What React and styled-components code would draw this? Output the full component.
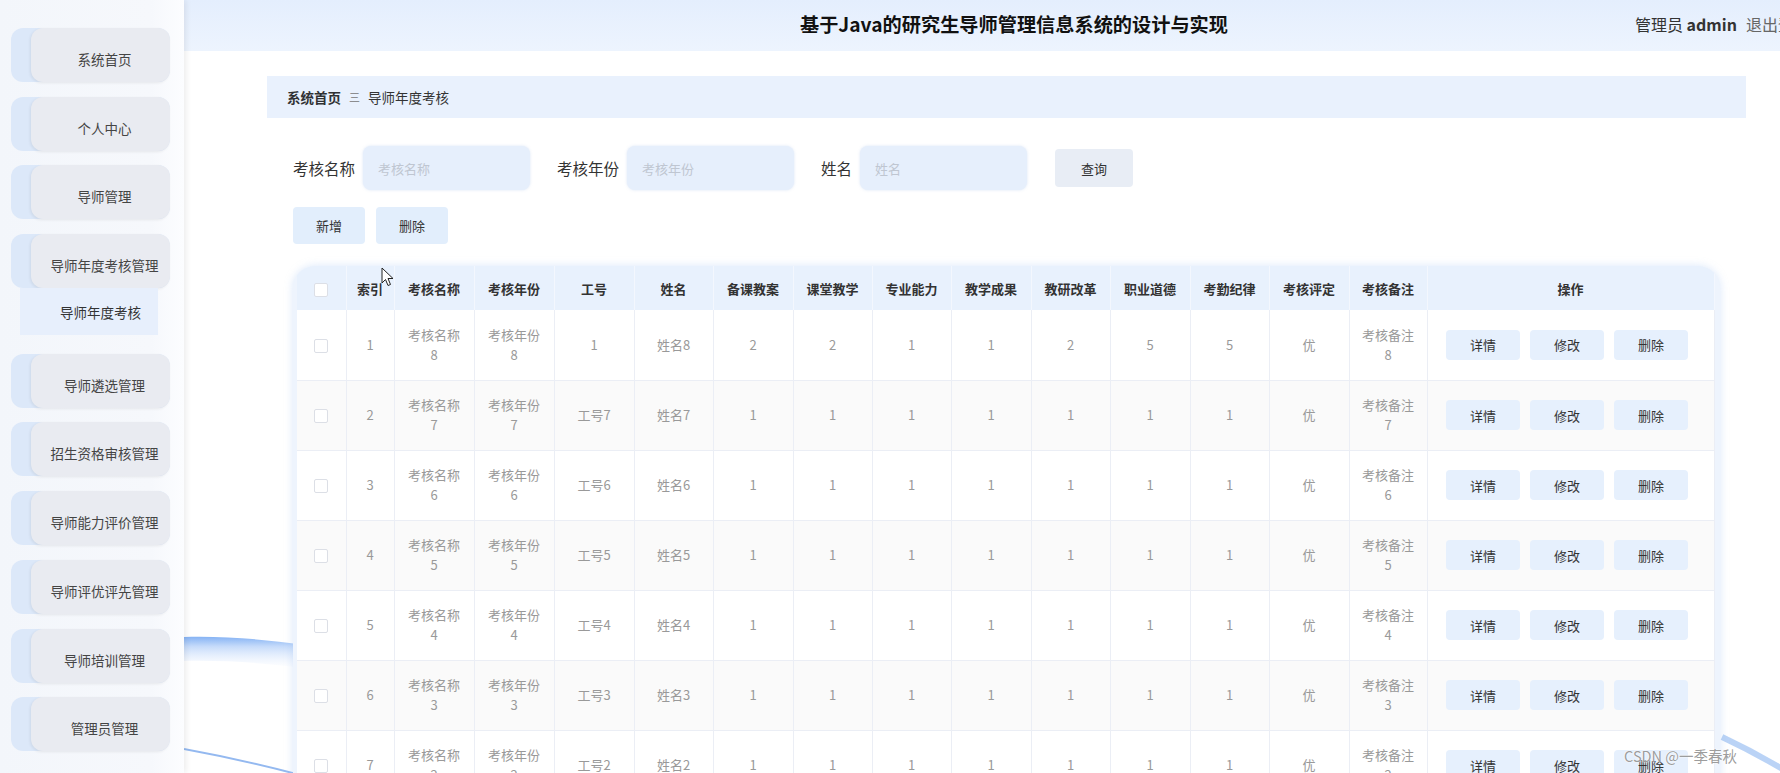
import React from "react";
import styled, { createGlobalStyle } from "styled-components";

const GlobalStyle = createGlobalStyle`
  html, body { margin: 0; padding: 0; width: 1780px; height: 773px; overflow: hidden; background: #fff; }
  body { font-family: "Noto Sans CJK SC", "Noto Sans", "Liberation Sans", sans-serif; color: #333; }
  * { box-sizing: border-box; }
`;

const Page = styled.div`
  display: flex;
  width: 1780px;
  height: 773px;
  overflow: hidden;
  position: relative;
`;

const Sidebar = styled.aside`
  width: 184px;
  flex: none;
  height: 100%;
  background: linear-gradient(90deg, #f3f6fb 0%, #f6f8fc 82%, #fcfdff 100%);
  box-shadow: 2px 0 6px rgba(0, 0, 0, 0.08);
  padding: 28px 0 0 11px;
  display: flex;
  flex-direction: column;
  gap: 14.7px;
  position: relative;
  z-index: 3;
`;

const NavGroup = styled.div`
  display: flex;
  flex-direction: column;
  padding-bottom: 4px;
`;

const NavItem = styled.div`
  width: 159px;
  height: 54px;
  flex: none;
  border-radius: 12px;
  background: #dce8f9;
  display: flex;
  padding-left: 20px;
`;

const NavInner = styled.div`
  flex: 1;
  border-radius: 12px;
  background: #e9ebf1;
  box-shadow: -1px 1px 3px rgba(0, 0, 0, 0.07);
  display: flex;
  align-items: center;
  justify-content: center;
  padding: 8px 0 0 8px;
  font-size: 13.5px;
  color: #444;
  white-space: nowrap;
`;

const SubItem = styled.div`
  margin-left: 9px;
  width: 138px;
  height: 47px;
  background: #e7effc;
  display: flex;
  align-items: center;
  padding-left: 40px;
  font-size: 13.5px;
  color: #333;
  white-space: nowrap;
`;

const Main = styled.main`
  flex: 1;
  min-width: 0;
  position: relative;
  display: flex;
  flex-direction: column;
`;

const BgArt = styled.svg`
  position: absolute;
  left: 0;
  top: 0;
  width: 1596px;
  height: 773px;
  z-index: 0;
  pointer-events: none;
`;

const Header = styled.header`
  height: 51px;
  flex: none;
  display: grid;
  grid-template-columns: 616px 835px 1fr;
  align-items: center;
  padding-bottom: 3px;
  background: linear-gradient(180deg, #e4eefd 0%, #edf4fe 100%);
  white-space: nowrap;
  overflow: hidden;
  position: relative;
  z-index: 1;
`;

const Title = styled.h1`
  grid-column: 2;
  margin: 0;
  font-size: 19.2px;
  font-weight: bold;
  color: #111;
`;

const UserInfo = styled.div`
  grid-column: 3;
  display: flex;
  gap: 9px;
  font-size: 16px;
  color: #333;
`;

const Strong = styled.b`
  font-weight: bold;
`;

const Logout = styled.span`
  color: #666;
`;

const Content = styled.div`
  position: relative;
  z-index: 1;
  padding: 25px 34px 0 83px;
  display: flex;
  flex-direction: column;
`;

const Breadcrumb = styled.div`
  height: 42px;
  background: #e9f1fd;
  display: flex;
  align-items: center;
  padding-left: 20px;
  font-size: 13.5px;
  color: #333;
`;

const CrumbHome = styled.span`
  font-weight: bold;
  color: #303133;
`;

const CrumbSep = styled.span`
  margin: 0 8px 0 8px;
  font-size: 11px;
  color: #777;
`;

const SearchRow = styled.div`
  margin-top: 28px;
  padding-left: 26px;
  height: 44px;
  display: flex;
  align-items: center;
`;

const Label = styled.span`
  font-size: 15.5px;
  color: #333;
  margin-right: 8px;
  white-space: nowrap;
`;

const Input = styled.input`
  width: 167px;
  height: 44px;
  border: none;
  border-radius: 8px;
  background: #e6effc;
  box-shadow: 0 0 3px rgba(150, 180, 230, 0.35);
  padding-left: 15px;
  margin-right: 27px;
  font-size: 13px;
  font-family: inherit;
  outline: none;
  &::placeholder { color: #bfc6d1; }
`;

const QueryButton = styled.button`
  width: 78px;
  height: 38px;
  border: none;
  border-radius: 4px;
  background: #e8edf5;
  color: #333;
  font-size: 13px;
  font-family: inherit;
  margin-left: 1px;
`;

const ActionRow = styled.div`
  margin-top: 17px;
  padding-left: 26px;
  display: flex;
  gap: 11px;
`;

const ActionButton = styled.button`
  width: 72px;
  height: 37px;
  border: none;
  border-radius: 4px;
  background: #e2eefc;
  color: #333;
  font-size: 13px;
  font-family: inherit;
`;

const TableCard = styled.div`
  margin: 22px 26px 0 26px;
  width: 1427px;
  border-radius: 22px 22px 0 0;
  background: #eef4fd;
  padding: 0 6px 0 4px;
  box-shadow: 0 0 8px rgba(150, 185, 240, 0.35);
  overflow: hidden;
`;

const Table = styled.table`
  width: 1417px;
  table-layout: fixed;
  border-collapse: collapse;
`;

const Th = styled.th`
  height: 44px;
  background: #e8f1fd;
  font-size: 13px;
  font-weight: bold;
  color: #333;
  text-align: center;
  border-right: 1px solid #f3f7fe;
  padding: 0 2px;
  white-space: nowrap;
`;

const Tr = styled.tr`
  background: ${(p) => (p.$striped ? "#fafafa" : "#ffffff")};
`;

const Td = styled.td`
  height: 70px;
  font-size: 13px;
  line-height: 20px;
  color: #999;
  text-align: center;
  border-right: 1px solid #ebeef5;
  border-bottom: 1px solid #ebeef5;
  padding: ${(p) => (p.$tight ? "0" : "0 12px")};
`;

const Check = styled.span`
  display: inline-block;
  width: 14px;
  height: 14px;
  border: 1px solid #dcdfe6;
  border-radius: 2px;
  background: #fff;
  vertical-align: middle;
`;

const OpGroup = styled.div`
  display: flex;
  justify-content: center;
  gap: 10px;
  padding-right: 7px;
`;

const OpButton = styled.button`
  width: 74px;
  height: 30px;
  border: none;
  border-radius: 4px;
  background: #e6f0fd;
  color: #333;
  font-size: 13px;
  font-family: inherit;
`;

const Watermark = styled.div`
  position: absolute;
  right: 43px;
  bottom: 7px;
  z-index: 5;
  font-size: 14.5px;
  color: rgba(130, 130, 130, 0.8);
  text-shadow: 0 0 2px #fff, 0 0 1px #fff;
  white-space: nowrap;
`;

const Cursor = styled.svg`
  position: absolute;
  left: 381px;
  top: 267px;
  width: 13px;
  height: 20px;
  z-index: 6;
`;

const menu = [
  "系统首页",
  "个人中心",
  "导师管理",
  "导师年度考核管理",
  "导师遴选管理",
  "招生资格审核管理",
  "导师能力评价管理",
  "导师评优评先管理",
  "导师培训管理",
  "管理员管理",
];

const cols = [49, 48, 80, 80, 80, 79, 80, 79, 79, 80, 79, 80, 79, 80, 78, 287];
const heads = [
  "",
  "索引",
  "考核名称",
  "考核年份",
  "工号",
  "姓名",
  "备课教案",
  "课堂教学",
  "专业能力",
  "教学成果",
  "教研改革",
  "职业道德",
  "考勤纪律",
  "考核评定",
  "考核备注",
  "操作",
];

const rows = [8, 7, 6, 5, 4, 3, 2].map((n, i) => ({
  idx: i + 1,
  name: `考核名称${n}`,
  year: `考核年份${n}`,
  no: n === 8 ? "1" : `工号${n}`,
  person: `姓名${n}`,
  scores: n === 8 ? [2, 2, 1, 1, 2, 5, 5] : [1, 1, 1, 1, 1, 1, 1],
  grade: "优",
  note: `考核备注${n}`,
}));

export default function App() {
  return (
    <>
      <GlobalStyle />
      <Page>
        <Sidebar>
          {menu.map((m) =>
            m === "导师年度考核管理" ? (
              <NavGroup key={m}>
                <NavItem>
                  <NavInner>{m}</NavInner>
                </NavItem>
                <SubItem>导师年度考核</SubItem>
              </NavGroup>
            ) : (
              <NavItem key={m}>
                <NavInner>{m}</NavInner>
              </NavItem>
            )
          )}
        </Sidebar>
        <Main>
          <BgArt viewBox="0 0 1596 773">
            <defs>
              <linearGradient id="band" x1="0" y1="0" x2="0" y2="1">
                <stop offset="0" stopColor="#86b3f4" />
                <stop offset="0.3" stopColor="#c4dafa" />
                <stop offset="1" stopColor="#eef4fe" stopOpacity="0.1" />
              </linearGradient>
            </defs>
            <path d="M0 637 C 40 636, 80 639, 120 645 L 120 668 C 80 663, 40 660, 0 661 Z" fill="url(#band)" />
            <path d="M0 749 Q 60 760 120 776" stroke="#94b9f0" strokeWidth="2" fill="none" />
            <path d="M1538 737 Q 1570 752 1600 770" stroke="#a9c8f4" strokeWidth="6" fill="none" opacity="0.8" />
          </BgArt>
          <Header>
            <Title>基于Java的研究生导师管理信息系统的设计与实现</Title>
            <UserInfo>
              <span>
                管理员 <Strong>admin</Strong>
              </span>
              <Logout>退出登录</Logout>
            </UserInfo>
          </Header>
          <Content>
            <Breadcrumb>
              <CrumbHome>系统首页</CrumbHome>
              <CrumbSep>三</CrumbSep>
              <span>导师年度考核</span>
            </Breadcrumb>
            <SearchRow>
              <Label>考核名称</Label>
              <Input placeholder="考核名称" />
              <Label>考核年份</Label>
              <Input placeholder="考核年份" />
              <Label>姓名</Label>
              <Input placeholder="姓名" />
              <QueryButton>查询</QueryButton>
            </SearchRow>
            <ActionRow>
              <ActionButton>新增</ActionButton>
              <ActionButton>删除</ActionButton>
            </ActionRow>
            <TableCard>
              <Table>
                <colgroup>
                  {cols.map((w, i) => (
                    <col key={i} style={{ width: w }} />
                  ))}
                </colgroup>
                <thead>
                  <tr>
                    {heads.map((h, i) => (
                      <Th key={i}>{i === 0 ? <Check /> : h}</Th>
                    ))}
                  </tr>
                </thead>
                <tbody>
                  {rows.map((r, i) => (
                    <Tr key={r.idx} $striped={i % 2 === 1}>
                      <Td $tight>
                        <Check />
                      </Td>
                      <Td $tight>{r.idx}</Td>
                      <Td>{r.name}</Td>
                      <Td>{r.year}</Td>
                      <Td>{r.no}</Td>
                      <Td>{r.person}</Td>
                      {r.scores.map((s, j) => (
                        <Td key={j}>{s}</Td>
                      ))}
                      <Td>{r.grade}</Td>
                      <Td>{r.note}</Td>
                      <Td $tight>
                        <OpGroup>
                          <OpButton>详情</OpButton>
                          <OpButton>修改</OpButton>
                          <OpButton>删除</OpButton>
                        </OpGroup>
                      </Td>
                    </Tr>
                  ))}
                </tbody>
              </Table>
            </TableCard>
          </Content>
        </Main>
        <Cursor viewBox="0 0 13 20">
          <path d="M1 1 L1 16 L4.5 12.5 L7 18.5 L9.5 17.5 L7 11.5 L12 11.5 Z" fill="#fff" stroke="#222" strokeWidth="1" strokeLinejoin="round" />
        </Cursor>
        <Watermark>CSDN @一季春秋</Watermark>
      </Page>
    </>
  );
}
